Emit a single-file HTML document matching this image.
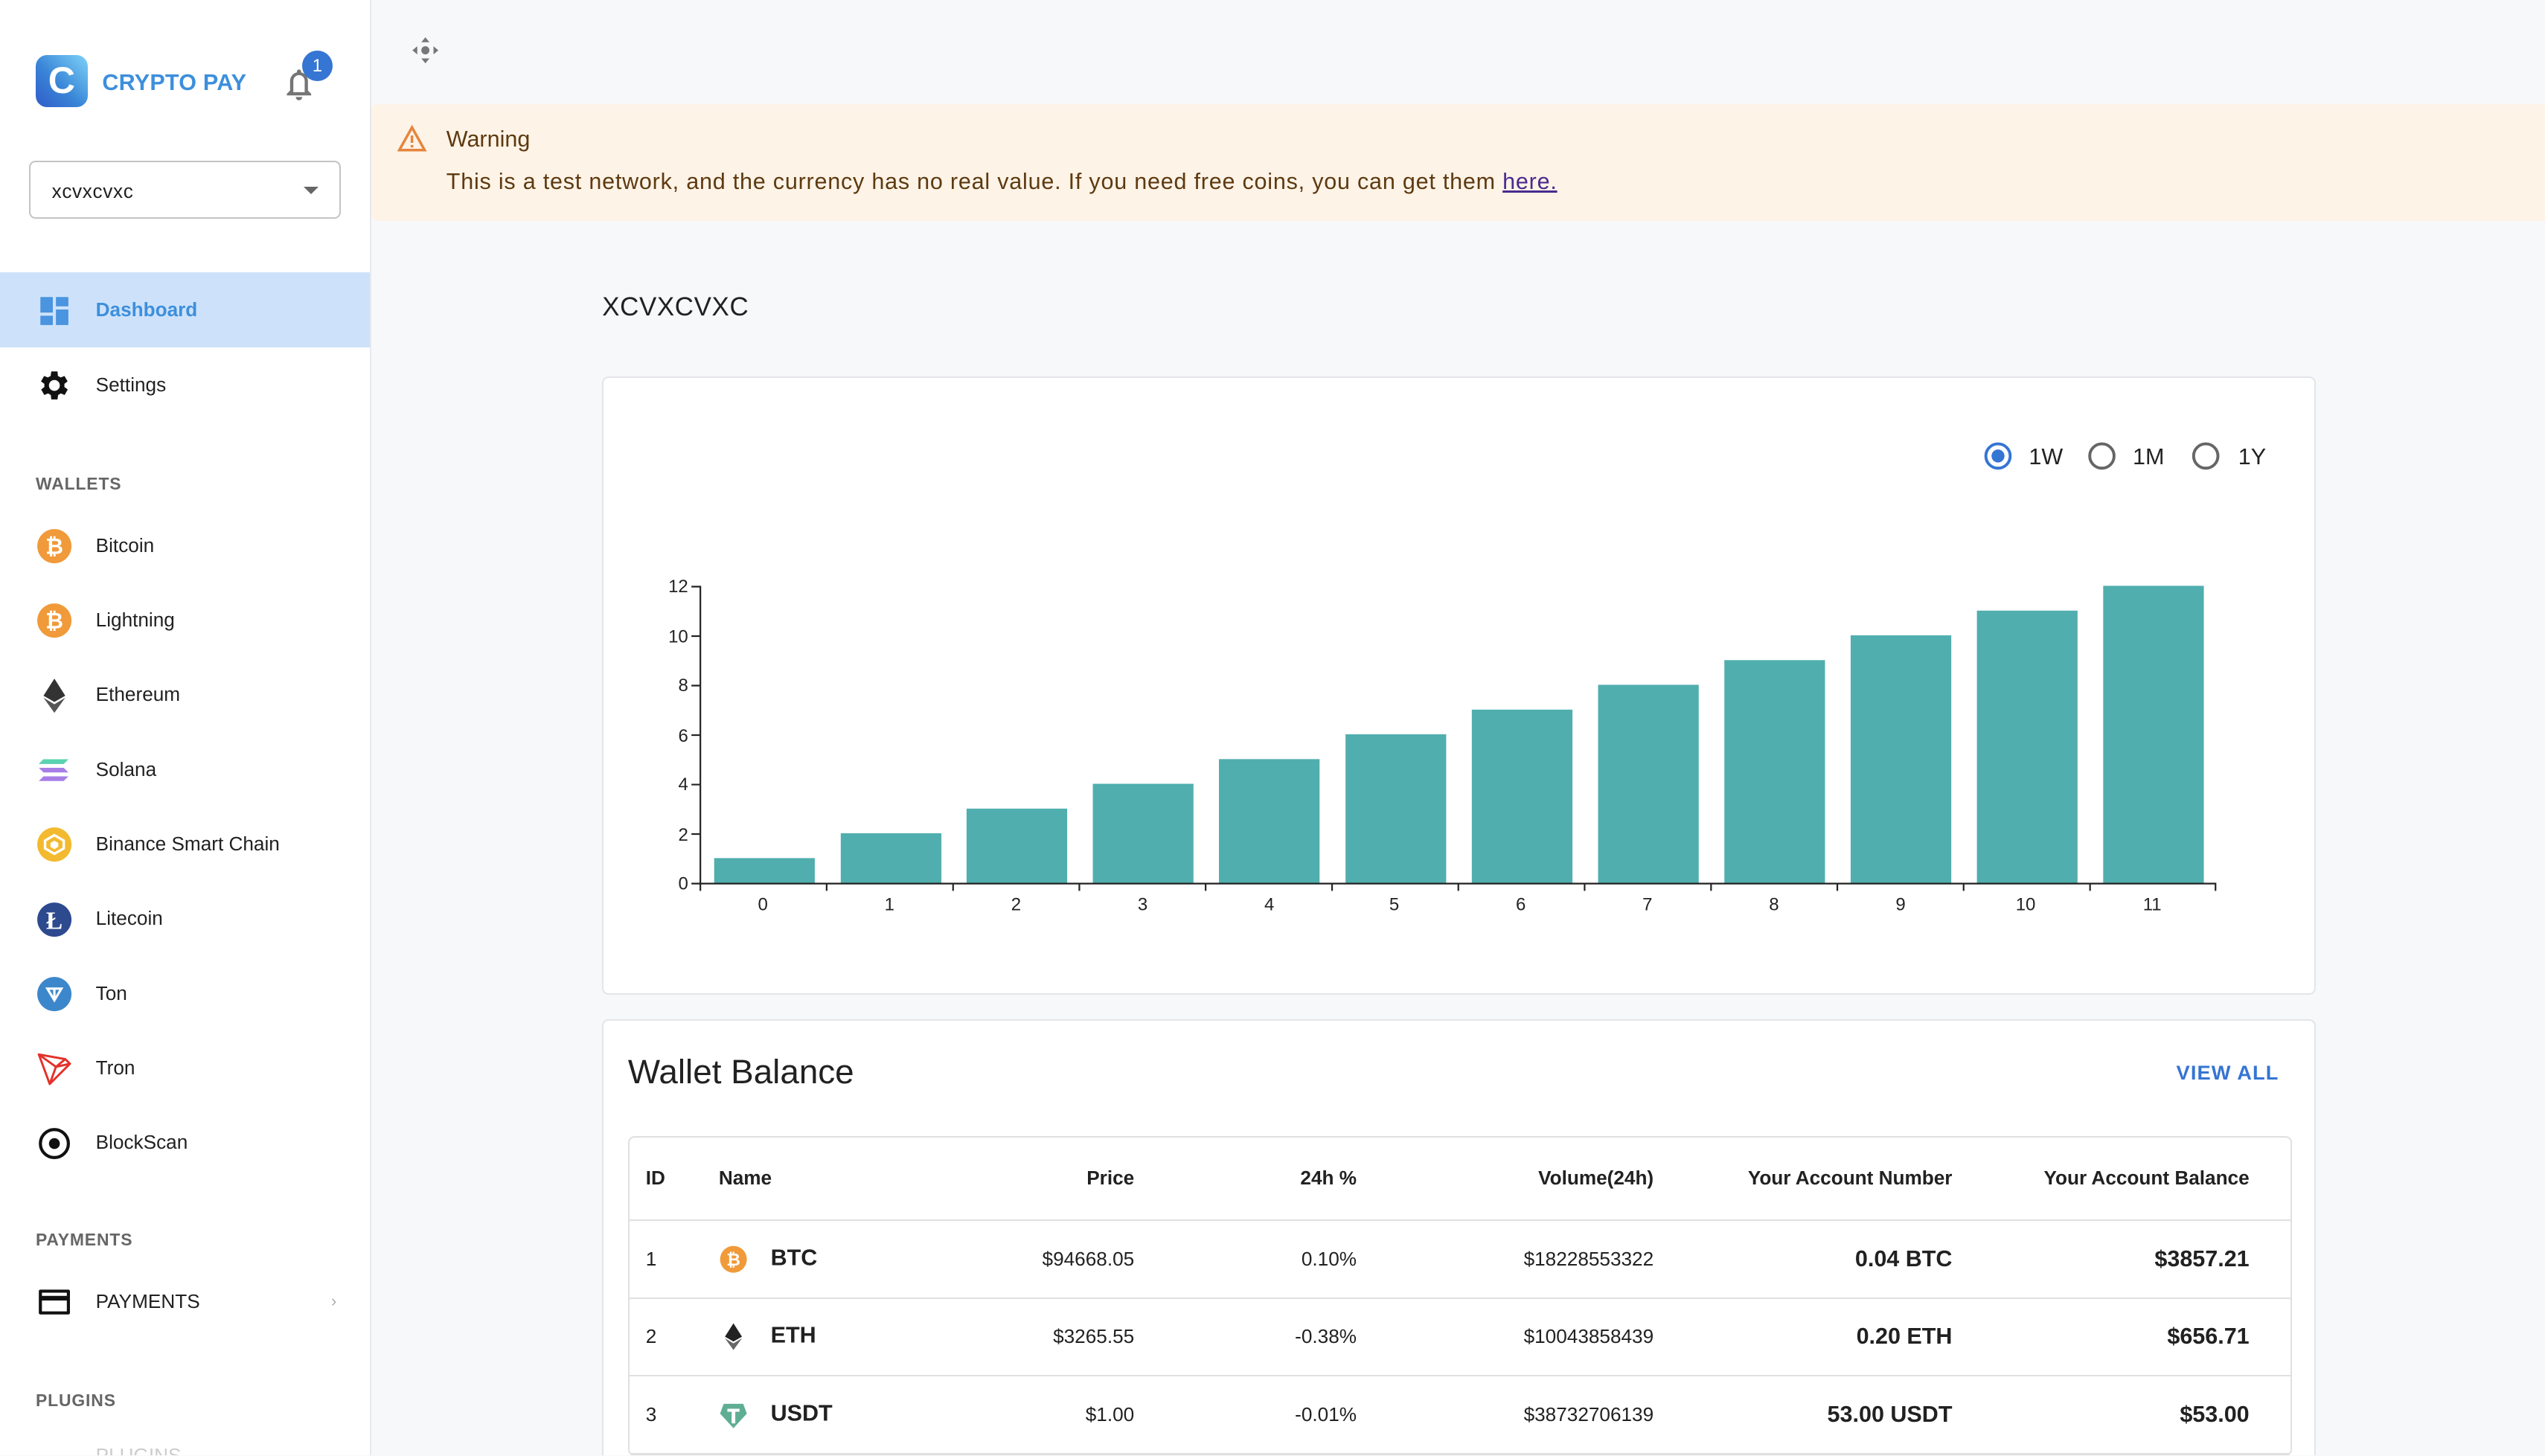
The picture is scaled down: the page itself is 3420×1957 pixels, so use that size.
<!DOCTYPE html>
<html><head><meta charset="utf-8"><style>
*{box-sizing:border-box;margin:0;padding:0}
html,body{width:3420px;height:1957px;overflow:hidden;background:#f7f8fa}
#w{zoom:2.18112;width:1568px;height:897px;position:relative;font-family:"Liberation Sans",Arial,sans-serif;color:#212121;overflow:hidden}
.sb{position:absolute;left:0;top:0;width:229px;height:897px;background:#fff;border-right:1px solid #e6e8ec}
.logo{position:absolute;left:22px;top:34px;width:32px;height:32px;border-radius:7px;background:linear-gradient(225deg,#7fd3f7,#3a86d8 55%,#2f5cc8);color:#fff;font-weight:bold;font-size:23px;text-align:center;line-height:32px}
.brand{position:absolute;left:63px;top:43px;color:#3d8fdc;font-weight:bold;font-size:14px;letter-spacing:.1px}
.badge{position:absolute;left:186px;top:31px;width:19px;height:19px;border-radius:50%;background:#3575d3;color:#fff;font-size:11px;text-align:center;line-height:19px}
.sel{position:absolute;left:18px;top:99px;width:192px;height:36px;border:1px solid #c4c4c4;border-radius:4px;font-size:12px;padding:11px 0 0 13px;letter-spacing:.3px}
.sel:after{content:"";position:absolute;right:13px;top:15px;border:5px solid transparent;border-top-color:#666;border-bottom:0}
.it{position:absolute;left:0;width:228px;height:46px;font-size:12px;padding-left:59px;line-height:46px}
.it .ic{position:absolute;left:22px;top:12px;width:23px;height:23px}
.act{background:#cde2fa;color:#3d8fdc;font-weight:bold}
.hd{position:absolute;left:22px;font-size:10.5px;font-weight:bold;color:#666;letter-spacing:.4px}
.warn{position:absolute;left:229px;top:64px;width:1339px;height:72px;background:#fdf3e7;border-radius:4px 0 0 4px;color:#5e3a10}
.card{position:absolute;background:#fff;border:1px solid #e3e5e8;border-radius:4px}
table{border-collapse:collapse;width:1025px;table-layout:fixed;font-size:12px}
td,th{height:48px;border-bottom:1px solid #e0e0e0;padding:0 10px;white-space:nowrap}
th{font-weight:bold;height:51px}
.r{text-align:right}
.b{font-weight:bold;font-size:14px}
.ci{display:inline-block;width:18px;height:18px;vertical-align:middle;margin-right:14px}
.lc{padding-right:27px}
</style></head><body><div id="w">
<div class="sb">
<div class="logo">C</div><div class="brand">CRYPTO PAY</div>
<svg style="position:absolute;left:174px;top:41px" width="20" height="22" viewBox="0 0 20 22"><path d="M10 2a1.3 1.3 0 0 1 1.3 1.3v.5A5.5 5.5 0 0 1 15.5 9v6l2 2v1h-15v-1l2-2V9a5.5 5.5 0 0 1 4.2-5.2v-.5A1.3 1.3 0 0 1 10 2zM8 19h4a2 2 0 0 1-4 0zM6.5 9v7h7V9a3.5 3.5 0 0 0-7 0z" fill="#757575"/></svg>
<div class="badge">1</div>
<div class="sel">xcvxcvxc</div>
<div class="it act" style="top:168px"><svg class="ic" viewBox="0 0 24 24"><path d="M3 3h8v10H3zM13 3h8v6h-8zM3 15h8v6H3zM13 11h8v10h-8z" fill="#4a94e0"/></svg>Dashboard</div>
<div class="it" style="top:214px"><svg class="ic" viewBox="0 0 24 24"><path fill="#111" d="M19.4 13a7.5 7.5 0 0 0 0-2l2.1-1.6-2-3.5-2.5 1a7.6 7.6 0 0 0-1.7-1L15 3h-4l-.4 2.9a7.6 7.6 0 0 0-1.7 1l-2.5-1-2 3.5L6.6 11a7.5 7.5 0 0 0 0 2l-2.1 1.6 2 3.5 2.5-1a7.6 7.6 0 0 0 1.7 1L11 21h4l.4-2.9a7.6 7.6 0 0 0 1.7-1l2.5 1 2-3.5zM13 15.5a3.5 3.5 0 1 1 0-7 3.5 3.5 0 0 1 0 7z" transform="translate(-1 0)"/></svg>Settings</div>
<div class="hd" style="top:292px">WALLETS</div>
<div class="it" style="top:313px"><svg class="ic" viewBox="0 0 24 24"><circle cx="12" cy="12" r="11" fill="#f09a3a"/><text x="12" y="17" font-size="14" font-weight="bold" fill="#fff" text-anchor="middle" font-family="Liberation Sans">₿</text></svg>Bitcoin</div>
<div class="it" style="top:359px"><svg class="ic" viewBox="0 0 24 24"><circle cx="12" cy="12" r="11" fill="#f09a3a"/><text x="12" y="17" font-size="14" font-weight="bold" fill="#fff" text-anchor="middle" font-family="Liberation Sans">₿</text></svg>Lightning</div>
<div class="it" style="top:405px"><svg class="ic" viewBox="0 0 24 24"><path d="M12 1l7 11-7 4-7-4z" fill="#333"/><path d="M12 17.5l7-4.2L12 23l-7-9.7z" fill="#555"/></svg>Ethereum</div>
<div class="it" style="top:451px"><svg class="ic" viewBox="0 0 24 24"><path d="M5 5h16l-3 3H2zM2 10.5h16l3 3H5zM5 16h16l-3 3H2z" fill="#a77ee8"/><path d="M5 5h16l-3 3H2z" fill="#58d4b0"/></svg>Solana</div>
<div class="it" style="top:497px"><svg class="ic" viewBox="0 0 24 24"><circle cx="12" cy="12" r="11" fill="#f3ba2f"/><path d="M12 6l6 3.5v5L12 18l-6-3.5v-5z" fill="none" stroke="#fff" stroke-width="1.6"/><path d="M12 9.5l2.5 1.5v2.5L12 15l-2.5-1.5V11z" fill="#fff"/></svg>Binance Smart Chain</div>
<div class="it" style="top:543px"><svg class="ic" viewBox="0 0 24 24"><circle cx="12" cy="12" r="11" fill="#2d4a8f"/><text x="12" y="18" font-size="16" font-weight="bold" fill="#fff" text-anchor="middle" font-family="Liberation Serif">Ł</text></svg>Litecoin</div>
<div class="it" style="top:589px"><svg class="ic" viewBox="0 0 24 24"><circle cx="12" cy="12" r="11" fill="#3c87cb"/><path d="M7.5 8.5h9L12 16zM12 8.5V16" fill="none" stroke="#fff" stroke-width="1.5"/></svg>Ton</div>
<div class="it" style="top:635px"><svg class="ic" viewBox="0 0 24 24"><path d="M2 3l17 3 3 3-13 13zM2 3l11 8 9-2M13 11L9 22M19 6l-6 5" fill="none" stroke="#e4312b" stroke-width="1.4" stroke-linejoin="round"/></svg>Tron</div>
<div class="it" style="top:681px"><svg class="ic" viewBox="0 0 24 24"><circle cx="12" cy="12" r="9" fill="none" stroke="#111" stroke-width="2"/><circle cx="12" cy="12" r="3.5" fill="#111"/></svg>BlockScan</div>
<div class="hd" style="top:758px">PAYMENTS</div>
<div class="it" style="top:779px"><svg class="ic" viewBox="0 0 24 24"><path d="M3 4h18a1 1 0 0 1 1 1v14a1 1 0 0 1-1 1H3a1 1 0 0 1-1-1V5a1 1 0 0 1 1-1zm1 2v2h16V6zm0 5v7h16v-7z" fill="#111"/></svg>PAYMENTS<span style="position:absolute;left:204px;color:#aaa;font-size:10px">›</span></div>
<div class="hd" style="top:857px">PLUGINS</div>
<div class="it" style="top:874px"><svg class="ic" viewBox="0 0 24 24"><path d="M4 15h16v9H4zM10 15v-3h4v3" fill="#111"/></svg><span style="color:#ccc">PLUGINS</span></div>
</div>
<svg style="position:absolute;left:253px;top:22px" width="18" height="18" viewBox="0 0 18 18" fill="#777"><circle cx="9" cy="9" r="2.5"/><path d="M9 1l2.5 3h-5zM9 17l2.5-3h-5zM1 9l3-2.5v5zM17 9l-3-2.5v5z"/></svg>
<div class="warn">
<svg style="position:absolute;left:16px;top:13px" width="18" height="17" viewBox="0 0 18 17"><path d="M9 1.5L16.8 15.5H1.2z" fill="none" stroke="#e5853d" stroke-width="1.6"/><path d="M9 6.5v4.5M9 12.3v1.5" stroke="#e5853d" stroke-width="1.6"/></svg>
<div style="position:absolute;left:46px;top:14px;font-size:14px">Warning</div>
<div style="position:absolute;left:46px;top:40px;font-size:14px;letter-spacing:.36px">This is a test network, and the currency has no real value. If you need free coins, you can get them <u style="color:#4b2a8f">here.</u></div>
</div>
<div style="position:absolute;left:371px;top:180px;font-size:16px;letter-spacing:.3px">XCVXCVXC</div>
<div class="card" style="left:371px;top:232px;width:1056px;height:381px"></div>
<svg style="position:absolute;left:0;top:0" width="1568" height="897" font-family="Liberation Sans" font-size="11" fill="#222">
<circle cx="1231" cy="281" r="7.5" fill="none" stroke="#3575d3" stroke-width="1.8"/><circle cx="1231" cy="281" r="4" fill="#3575d3"/>
<text x="1250" y="286" font-size="14">1W</text>
<circle cx="1295" cy="281" r="7.5" fill="none" stroke="#666" stroke-width="1.8"/><text x="1314" y="286" font-size="14">1M</text>
<circle cx="1359" cy="281" r="7.5" fill="none" stroke="#666" stroke-width="1.8"/><text x="1379" y="286" font-size="14">1Y</text>
<g fill="#50aeae">
<rect x="440" y="528.8" width="62" height="15.2"/><rect x="518" y="513.5" width="62" height="30.5"/><rect x="595.5" y="498.3" width="62" height="45.7"/><rect x="673.3" y="483" width="62" height="61"/><rect x="751" y="467.8" width="62" height="76.2"/><rect x="829" y="452.5" width="62" height="91.5"/><rect x="906.8" y="437.3" width="62" height="106.7"/><rect x="984.6" y="422" width="62" height="122"/><rect x="1062.4" y="406.8" width="62" height="137.2"/><rect x="1140.2" y="391.5" width="62" height="152.5"/><rect x="1218" y="376.3" width="62" height="167.7"/><rect x="1295.8" y="361" width="62" height="183"/>
</g>
<path d="M431.5 361V544.5H1365M426 361.5h5.5M426 392h5.5M426 422.5h5.5M426 453h5.5M426 483.5h5.5M426 514h5.5M426 544.5h5.5M431.5 544v5M509.3 544v5M587.2 544v5M665 544v5M742.8 544v5M820.7 544v5M898.5 544v5M976.3 544v5M1054.2 544v5M1132 544v5M1209.8 544v5M1287.7 544v5M1365 544v5" stroke="#222" fill="none"/>
<g text-anchor="end"><text x="424" y="365">12</text><text x="424" y="396">10</text><text x="424" y="426">8</text><text x="424" y="457">6</text><text x="424" y="487">4</text><text x="424" y="518">2</text><text x="424" y="548">0</text></g>
<g text-anchor="middle"><text x="470" y="561">0</text><text x="548" y="561">1</text><text x="626" y="561">2</text><text x="704" y="561">3</text><text x="782" y="561">4</text><text x="859" y="561">5</text><text x="937" y="561">6</text><text x="1015" y="561">7</text><text x="1093" y="561">8</text><text x="1171" y="561">9</text><text x="1248" y="561">10</text><text x="1326" y="561">11</text></g>
</svg>
<div class="card" style="left:371px;top:628px;width:1056px;height:300px">
<div style="position:absolute;left:15px;top:20px;font-size:21px">Wallet Balance</div>
<div style="position:absolute;right:22px;top:25px;font-size:12.5px;color:#3575d3;font-weight:bold;letter-spacing:.5px">VIEW ALL</div>
<div style="position:absolute;left:15px;top:71px;width:1025px;border:1px solid #e0e0e0;border-radius:4px;overflow:hidden">
<table>
<colgroup><col style="width:45px"><col style="width:140px"><col style="width:136px"><col style="width:137px"><col style="width:183px"><col style="width:184px"><col style="width:200px"></colgroup>
<tr><th style="text-align:left">ID</th><th style="text-align:left">Name</th><th class="r">Price</th><th class="r">24h %</th><th class="r">Volume(24h)</th><th class="r">Your Account Number</th><th class="r lc">Your Account Balance</th></tr>
<tr><td>1</td><td class="b"><svg class="ci" viewBox="0 0 24 24"><circle cx="12" cy="12" r="11" fill="#f09a3a"/><text x="12" y="17" font-size="14" font-weight="bold" fill="#fff" text-anchor="middle" font-family="Liberation Sans">₿</text></svg>BTC</td><td class="r">$94668.05</td><td class="r">0.10%</td><td class="r">$18228553322</td><td class="r b">0.04 BTC</td><td class="r b lc">$3857.21</td></tr>
<tr><td>2</td><td class="b"><svg class="ci" viewBox="0 0 24 24"><path d="M12 1l7 11-7 4-7-4z" fill="#222"/><path d="M12 17.5l7-4.2L12 23l-7-9.7z" fill="#666"/></svg>ETH</td><td class="r">$3265.55</td><td class="r">-0.38%</td><td class="r">$10043858439</td><td class="r b">0.20 ETH</td><td class="r b lc">$656.71</td></tr>
<tr><td>3</td><td class="b"><svg class="ci" viewBox="0 0 24 24"><path d="M4 3h16l3 8-11 12L1 11z" fill="#5fae94"/><path d="M7 7h10v2.5h-3.5V19h-3V9.5H7z" fill="#fff"/></svg>USDT</td><td class="r">$1.00</td><td class="r">-0.01%</td><td class="r">$38732706139</td><td class="r b">53.00 USDT</td><td class="r b lc">$53.00</td></tr>
</table></div></div>
</div></body></html>
